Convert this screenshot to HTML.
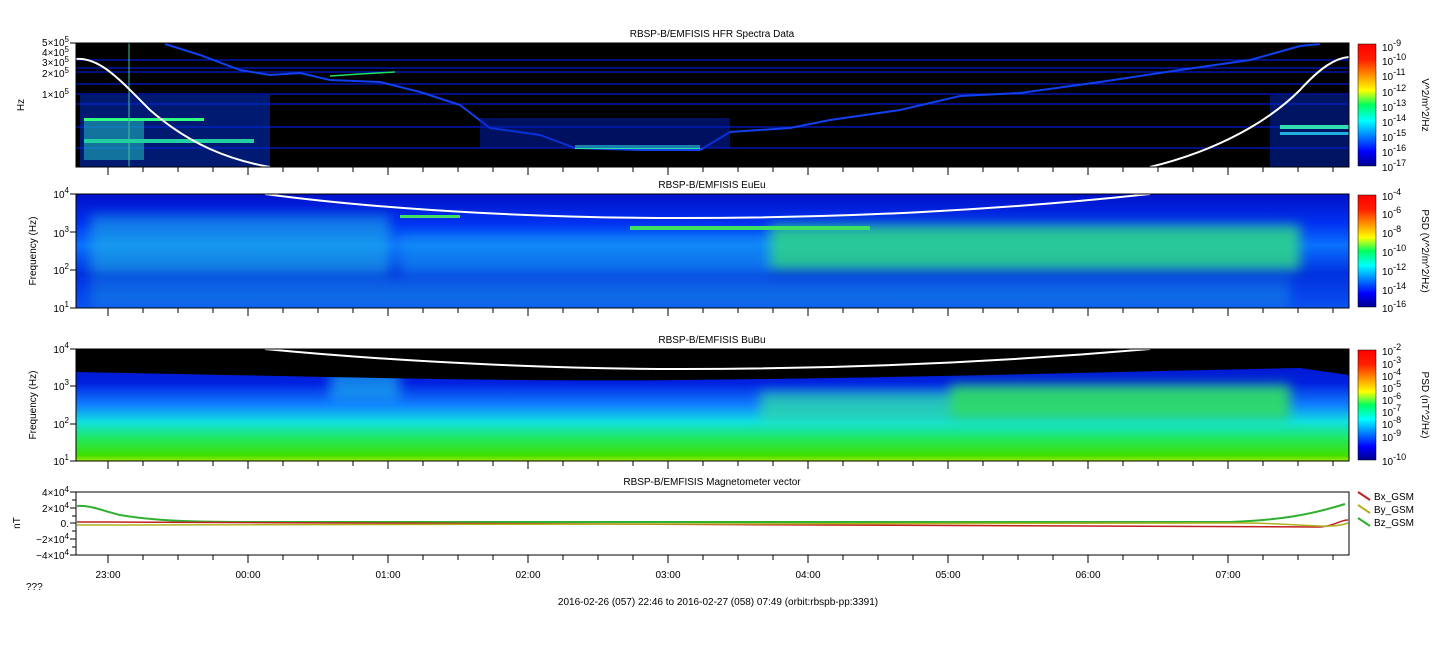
<!DOCTYPE html>
<html><head><style>
html,body{margin:0;padding:0;background:#fff;width:1447px;height:658px;overflow:hidden}
svg{display:block}
text{font-family:"Liberation Sans",sans-serif;font-size:10px;fill:#000}
</style></head><body>
<svg width="1447" height="658" viewBox="0 0 1447 658" xmlns="http://www.w3.org/2000/svg">
<defs>
<linearGradient id="jet" x1="0" y1="1" x2="0" y2="0">
<stop offset="0" stop-color="#00008f"/><stop offset="0.12" stop-color="#0000ff"/><stop offset="0.37" stop-color="#00ffff"/><stop offset="0.5" stop-color="#00ff60"/><stop offset="0.62" stop-color="#ffff00"/><stop offset="0.87" stop-color="#ff2000"/><stop offset="1" stop-color="#ff0000"/>
</linearGradient>
<linearGradient id="p3b" x1="0" y1="0" x2="0" y2="1">
<stop offset="0" stop-color="#0010c0"/><stop offset="0.3" stop-color="#0020e0"/><stop offset="0.5" stop-color="#1080ff"/><stop offset="0.65" stop-color="#10e0e0"/><stop offset="0.8" stop-color="#20e860"/><stop offset="0.95" stop-color="#40e000"/><stop offset="1" stop-color="#a0e800"/>
</linearGradient>
<linearGradient id="p2v" x1="0" y1="0" x2="0" y2="1">
<stop offset="0" stop-color="#0010c8"/><stop offset="0.25" stop-color="#0030f0"/><stop offset="0.45" stop-color="#0a70ff"/><stop offset="0.7" stop-color="#0030e0"/><stop offset="1" stop-color="#0a50f0"/>
</linearGradient>
<filter id="bl"><feGaussianBlur stdDeviation="6"/></filter>
<clipPath id="c2"><rect x="76" y="194" width="1273" height="114"/></clipPath>
<clipPath id="c3"><rect x="76" y="349" width="1273" height="112"/></clipPath>
</defs>

<text x="712" y="37" text-anchor="middle">RBSP-B/EMFISIS  HFR Spectra Data</text>
<text x="712" y="188" text-anchor="middle">RBSP-B/EMFISIS  EuEu</text>
<text x="712" y="343" text-anchor="middle">RBSP-B/EMFISIS  BuBu</text>
<text x="712" y="485" text-anchor="middle">RBSP-B/EMFISIS  Magnetometer vector</text>

<!-- Panel 1 -->
<rect x="76" y="43" width="1273" height="124" fill="#000"/>
<g stroke="#0018d0" stroke-width="1.2">
<line x1="76" y1="60" x2="1349" y2="60"/><line x1="76" y1="68" x2="1349" y2="68"/>
<line x1="76" y1="72" x2="1349" y2="72"/><line x1="76" y1="84" x2="1349" y2="84"/>
<line x1="76" y1="104" x2="1349" y2="104"/><line x1="76" y1="127" x2="1349" y2="127"/>
<line x1="76" y1="148" x2="1349" y2="148"/><line x1="76" y1="94" x2="1349" y2="94"/>
</g>
<polyline fill="none" stroke="#1040f0" stroke-width="2" points="165,44 200,55 240,70 270,75 300,73 330,80 380,82 420,92 460,105 490,128 540,135 575,148 640,150 700,150 730,132 790,128 830,120 900,110 960,96 1020,93 1100,82 1180,70 1250,60 1300,46 1320,44"/>
<polyline fill="none" stroke="#20e060" stroke-width="1.5" points="330,76 360,74 395,72"/>
<rect x="575" y="145" width="125" height="4" fill="#30e0a0"/>
<rect x="480" y="118" width="250" height="30" fill="#0020c0" opacity="0.5"/>
<rect x="80" y="95" width="190" height="72" fill="#0030d0" opacity="0.55"/>
<rect x="84" y="120" width="60" height="40" fill="#20c0c0" opacity="0.55"/>
<rect x="84" y="118" width="120" height="3" fill="#30ff80"/>
<rect x="84" y="139" width="170" height="4" fill="#20d0a0"/>
<rect x="1270" y="95" width="79" height="72" fill="#0028c8" opacity="0.5"/>
<rect x="1280" y="125" width="69" height="4" fill="#30e0b0"/>
<rect x="1280" y="132" width="69" height="3" fill="#20b0e0"/>
<line x1="129" y1="43" x2="129" y2="167" stroke="#40c0a0" stroke-width="1"/>
<path d="M76,59 C100,57 120,80 150,110 C190,145 230,160 270,167" fill="none" stroke="#fff" stroke-width="2"/>
<path d="M1150,167 C1220,150 1270,120 1300,90 C1320,68 1335,58 1349,57" fill="none" stroke="#fff" stroke-width="2"/>
<rect x="76" y="43" width="1273" height="124" fill="none" stroke="#000"/>

<!-- Panel 2 -->
<rect x="76" y="194" width="1273" height="114" fill="url(#p2v)"/>
<g filter="url(#bl)" clip-path="url(#c2)">
<rect x="90" y="215" width="300" height="60" fill="#20c0e0" opacity="0.5"/>
<rect x="400" y="235" width="370" height="40" fill="#10a0f0" opacity="0.5"/>
<rect x="770" y="225" width="530" height="45" fill="#30e080" opacity="0.8"/>
<rect x="90" y="280" width="1200" height="28" fill="#10b0e0" opacity="0.35"/>
</g>
<rect x="630" y="226" width="240" height="4" fill="#40e060"/>
<rect x="400" y="215" width="60" height="3" fill="#40e060"/>
<path d="M265,194 C400,212 560,218 680,218 C850,218 1000,210 1150,194" fill="none" stroke="#fff" stroke-width="2"/>
<rect x="76" y="194" width="1273" height="114" fill="none" stroke="#000"/>

<!-- Panel 3 -->
<rect x="76" y="349" width="1273" height="112" fill="url(#p3b)"/>
<g filter="url(#bl)" clip-path="url(#c3)">
<rect x="950" y="385" width="340" height="35" fill="#30e060" opacity="0.9"/>
<rect x="760" y="392" width="190" height="30" fill="#30e0a0" opacity="0.7"/>
<rect x="330" y="370" width="70" height="30" fill="#20c0f0" opacity="0.6"/>
</g>
<path d="M76,349 L76,372 C300,376 500,382 680,380 C900,378 1100,372 1300,368 L1349,375 L1349,349 Z" fill="#000"/>
<path d="M265,349 C400,362 560,369 680,369 C850,369 1000,362 1150,349" fill="none" stroke="#fff" stroke-width="2"/>
<rect x="76" y="349" width="1273" height="112" fill="none" stroke="#000"/>

<!-- Panel 4 -->
<rect x="76" y="492" width="1273" height="63" fill="#fff" stroke="#000"/>
<path d="M77,506 C90,505 100,510 120,515 C150,520 180,522 250,522 L1230,522 C1280,520 1310,515 1345,504" fill="none" stroke="#30b030" stroke-width="2"/>
<path d="M77,522 L110,522 C1000,524 1260,523 1320,527 C1335,526 1340,520 1348,520" fill="none" stroke="#c02020" stroke-width="1.5"/>
<path d="M77,525 L100,525 C110,523 300,523 1240,523 C1300,523 1330,530 1348,523" fill="none" stroke="#b0b020" stroke-width="1.5"/>

<g text-anchor="end">
<text x="69" y="46">5×10<tspan dy="-4" font-size="8">5</tspan></text>
<text x="69" y="56">4×10<tspan dy="-4" font-size="8">5</tspan></text>
<text x="69" y="66">3×10<tspan dy="-4" font-size="8">5</tspan></text>
<text x="69" y="77">2×10<tspan dy="-4" font-size="8">5</tspan></text>
<text x="69" y="98">1×10<tspan dy="-4" font-size="8">5</tspan></text>
<text x="69" y="198">10<tspan dy="-5" font-size="8">4</tspan></text>
<text x="69" y="237">10<tspan dy="-5" font-size="8">3</tspan></text>
<text x="69" y="274">10<tspan dy="-5" font-size="8">2</tspan></text>
<text x="69" y="312">10<tspan dy="-5" font-size="8">1</tspan></text>
<text x="69" y="353">10<tspan dy="-5" font-size="8">4</tspan></text>
<text x="69" y="390">10<tspan dy="-5" font-size="8">3</tspan></text>
<text x="69" y="428">10<tspan dy="-5" font-size="8">2</tspan></text>
<text x="69" y="465">10<tspan dy="-5" font-size="8">1</tspan></text>
<text x="69" y="496">4×10<tspan dy="-4" font-size="8">4</tspan></text>
<text x="69" y="512">2×10<tspan dy="-4" font-size="8">4</tspan></text>
<text x="69" y="527">0.</text>
<text x="69" y="543">−2×10<tspan dy="-4" font-size="8">4</tspan></text>
<text x="69" y="559">−4×10<tspan dy="-4" font-size="8">4</tspan></text>
</g>
<text transform="translate(24,105) rotate(-90)" text-anchor="middle">Hz</text>
<text transform="translate(36,251) rotate(-90)" text-anchor="middle">Frequency (Hz)</text>
<text transform="translate(36,405) rotate(-90)" text-anchor="middle">Frequency (Hz)</text>
<text transform="translate(20,523) rotate(-90)" text-anchor="middle">nT</text>

<!-- Y-axis ticks -->
<g stroke="#000">
<path d="M70,43h6M70,194h6M70,232h6M70,270h6M70,308h6M70,349h6M70,386h6M70,424h6M70,461h6M70,492h6M70,508h6M70,523h6M70,539h6M70,555h6M72,500h4M72,516h4M72,531h4M72,547h4"/>
</g>

<!-- X ticks (outward) -->
<g stroke="#000" stroke-width="1" id="tk">
<path id="tp" d="M108,0v8M143,0v5M178,0v5M213,0v5M248,0v8M283,0v5M318,0v5M353,0v5M388,0v8M423,0v5M458,0v5M493,0v5M528,0v8M563,0v5M598,0v5M633,0v5M668,0v8M703,0v5M738,0v5M773,0v5M808,0v8M843,0v5M878,0v5M913,0v5M948,0v8M983,0v5M1018,0v5M1053,0v5M1088,0v8M1123,0v5M1158,0v5M1193,0v5M1228,0v8M1263,0v5M1298,0v5M1333,0v5" transform="translate(0,167)"/>
<use href="#tp" transform="translate(0,141)"/>
<use href="#tp" transform="translate(0,294)"/>
<use href="#tp" transform="translate(0,388)"/>
</g>
<g text-anchor="middle">
<text x="108" y="578">23:00</text><text x="248" y="578">00:00</text><text x="388" y="578">01:00</text>
<text x="528" y="578">02:00</text><text x="668" y="578">03:00</text><text x="808" y="578">04:00</text>
<text x="948" y="578">05:00</text><text x="1088" y="578">06:00</text><text x="1228" y="578">07:00</text>
</g>
<text x="26" y="590">???</text>
<text x="718" y="605" text-anchor="middle">2016-02-26 (057) 22:46 to 2016-02-27 (058) 07:49 (orbit:rbspb-pp:3391)</text>

<rect x="1358" y="44" width="18" height="122" fill="url(#jet)" stroke="#000" stroke-width="0.5"/>
<rect x="1358" y="195" width="18" height="112" fill="url(#jet)" stroke="#000" stroke-width="0.5"/>
<rect x="1358" y="350" width="18" height="110" fill="url(#jet)" stroke="#000" stroke-width="0.5"/>
<g font-size="11">
<text x="1382" y="51">10<tspan dy="-5" font-size="9">-9</tspan></text>
<text x="1382" y="65">10<tspan dy="-5" font-size="9">-10</tspan></text>
<text x="1382" y="80">10<tspan dy="-5" font-size="9">-11</tspan></text>
<text x="1382" y="96">10<tspan dy="-5" font-size="9">-12</tspan></text>
<text x="1382" y="111">10<tspan dy="-5" font-size="9">-13</tspan></text>
<text x="1382" y="126">10<tspan dy="-5" font-size="9">-14</tspan></text>
<text x="1382" y="141">10<tspan dy="-5" font-size="9">-15</tspan></text>
<text x="1382" y="156">10<tspan dy="-5" font-size="9">-16</tspan></text>
<text x="1382" y="171">10<tspan dy="-5" font-size="9">-17</tspan></text>
<text x="1382" y="200">10<tspan dy="-5" font-size="9">-4</tspan></text>
<text x="1382" y="218">10<tspan dy="-5" font-size="9">-6</tspan></text>
<text x="1382" y="237">10<tspan dy="-5" font-size="9">-8</tspan></text>
<text x="1382" y="256">10<tspan dy="-5" font-size="9">-10</tspan></text>
<text x="1382" y="275">10<tspan dy="-5" font-size="9">-12</tspan></text>
<text x="1382" y="294">10<tspan dy="-5" font-size="9">-14</tspan></text>
<text x="1382" y="312">10<tspan dy="-5" font-size="9">-16</tspan></text>
<text x="1382" y="355">10<tspan dy="-5" font-size="9">-2</tspan></text>
<text x="1382" y="368">10<tspan dy="-5" font-size="9">-3</tspan></text>
<text x="1382" y="380">10<tspan dy="-5" font-size="9">-4</tspan></text>
<text x="1382" y="392">10<tspan dy="-5" font-size="9">-5</tspan></text>
<text x="1382" y="404">10<tspan dy="-5" font-size="9">-6</tspan></text>
<text x="1382" y="416">10<tspan dy="-5" font-size="9">-7</tspan></text>
<text x="1382" y="428">10<tspan dy="-5" font-size="9">-8</tspan></text>
<text x="1382" y="441">10<tspan dy="-5" font-size="9">-9</tspan></text>
<text x="1382" y="465">10<tspan dy="-5" font-size="9">-10</tspan></text>
</g>
<text transform="translate(1422,105) rotate(90)" text-anchor="middle">V^2/m^2/Hz</text>
<text transform="translate(1422,251) rotate(90)" text-anchor="middle">PSD (V^2/m^2/Hz)</text>
<text transform="translate(1422,405) rotate(90)" text-anchor="middle">PSD (nT^2/Hz)</text>

<line x1="1358" y1="492" x2="1370" y2="500" stroke="#c02020" stroke-width="2"/>
<text x="1374" y="500">Bx_GSM</text>
<line x1="1358" y1="505" x2="1370" y2="513" stroke="#b0b020" stroke-width="2"/>
<text x="1374" y="513">By_GSM</text>
<line x1="1358" y1="518" x2="1370" y2="526" stroke="#30b030" stroke-width="2"/>
<text x="1374" y="526">Bz_GSM</text>
</svg>
</body></html>
